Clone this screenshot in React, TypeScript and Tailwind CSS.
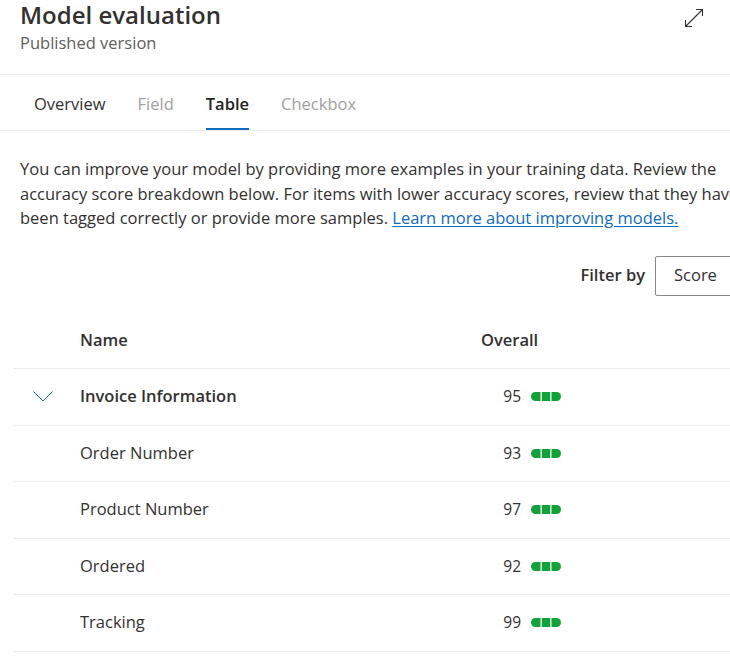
import React from 'react'

const rows = [
  { name: 'Invoice Information', score: 95, group: true },
  { name: 'Order Number', score: 93 },
  { name: 'Product Number', score: 97 },
  { name: 'Ordered', score: 92 },
  { name: 'Tracking', score: 99 },
]

const tabs = [
  { label: 'Overview', state: 'normal' },
  { label: 'Field', state: 'disabled' },
  { label: 'Table', state: 'active' },
  { label: 'Checkbox', state: 'disabled' },
]

function ExpandIcon() {
  return (
    <svg width="20" height="20" viewBox="0 0 20 20" fill="none" stroke="#323130" strokeWidth="1.1">
      <line x1="1.5" y1="18.5" x2="18.5" y2="1.5" />
      <polyline points="12,1.5 18.5,1.5 18.5,8" />
      <polyline points="1.5,12 1.5,18.5 8,18.5" />
    </svg>
  )
}

function ScoreBar() {
  return (
    <svg width="30" height="9" viewBox="0 0 30 9">
      <rect x="0" y="0" width="30" height="9" rx="4.5" fill="#13a13a" />
      <rect x="9.5" y="0" width="1.3" height="9" fill="#ffffff" />
      <rect x="19.2" y="0" width="1.3" height="9" fill="#ffffff" />
    </svg>
  )
}

export default function App() {
  return (
    <div className="w-[730px] h-[665px] overflow-hidden bg-white text-[#323130] font-['Open_Sans',sans-serif]">
      {/* Header */}
      <div className="flex justify-between border-b border-[#edebe9] pl-[20px] pr-[26px] pb-[19px]">
        <div>
          <div className="text-[24px] leading-[30px] font-semibold">Model evaluation</div>
          <div className="mt-[1px] text-[16.5px] leading-[24px] text-[#605e5c]">Published version</div>
        </div>
        <div className="pt-[8px]">
          <ExpandIcon />
        </div>
      </div>

      {/* Tabs */}
      <div className="flex border-b border-[#edebe9] pl-[18px]">
        {tabs.map((t) => (
          <div key={t.label} className="px-[16px] pt-[17px]">
            <div
              className={
                'text-[16.5px] leading-[24px] pb-[12px] border-b-2 ' +
                (t.state === 'active'
                  ? 'border-[#0f6cbd] font-semibold text-[#242424]'
                  : t.state === 'disabled'
                    ? 'border-transparent text-[#a19f9d]'
                    : 'border-transparent text-[#323130]')
              }
            >
              {t.label}
            </div>
          </div>
        ))}
      </div>

      <div className="w-[750px]">
        {/* Description */}
        <p className="mt-[26px] px-[20px] text-[16.5px] leading-[24.5px] whitespace-nowrap">
          You can improve your model by providing more examples in your training data. Review the
          <br />
          accuracy score breakdown below. For items with lower accuracy scores, review that they have
          <br />
          been tagged correctly or provide more samples.{' '}
          <a href="#" className="text-[#0f6cbd] underline underline-offset-2">
            Learn more about improving models.
          </a>
        </p>

        {/* Filter */}
        <div className="mt-[25px] flex items-center justify-end gap-[10px]">
          <span className="text-[16.5px] font-semibold">Filter by</span>
          <div className="w-[95px] h-[40px] border border-[#8a8886] rounded-[2px] flex items-center justify-between pl-[18px] pr-[8px]">
            <span className="text-[16.5px]">Score</span>
            <svg width="12" height="12" viewBox="0 0 12 12" fill="none" stroke="#605e5c" strokeWidth="1">
              <polyline points="1.5,4 6,8.5 10.5,4" />
            </svg>
          </div>
        </div>

        {/* Table */}
        <div className="mt-[18px] ml-[14px] text-[16.5px]">
          <div className="flex items-center h-[55.5px] border-b border-[#edebe9] font-semibold">
            <div className="w-[66px]" />
            <div className="w-[401px]">Name</div>
            <div>Overall</div>
          </div>
          {rows.map((r) => (
            <div key={r.name} className="flex items-center h-[56.5px] border-b border-[#edebe9]">
              <div className="w-[66px] pl-[19px] flex items-center">
                {r.group && (
                  <svg width="20" height="11" viewBox="0 0 20 11" fill="none" stroke="#0f6cbd" strokeWidth="1">
                    <polyline points="0.5,0.5 10,10 19.5,0.5" />
                  </svg>
                )}
              </div>
              <div className={'w-[401px] ' + (r.group ? 'font-semibold' : '')}>{r.name}</div>
              <div className="flex items-center gap-[10px]">
                <span className="w-[40px] text-right text-[15.5px]">{r.score}</span>
                <ScoreBar />
              </div>
            </div>
          ))}
        </div>
      </div>
    </div>
  )
}
